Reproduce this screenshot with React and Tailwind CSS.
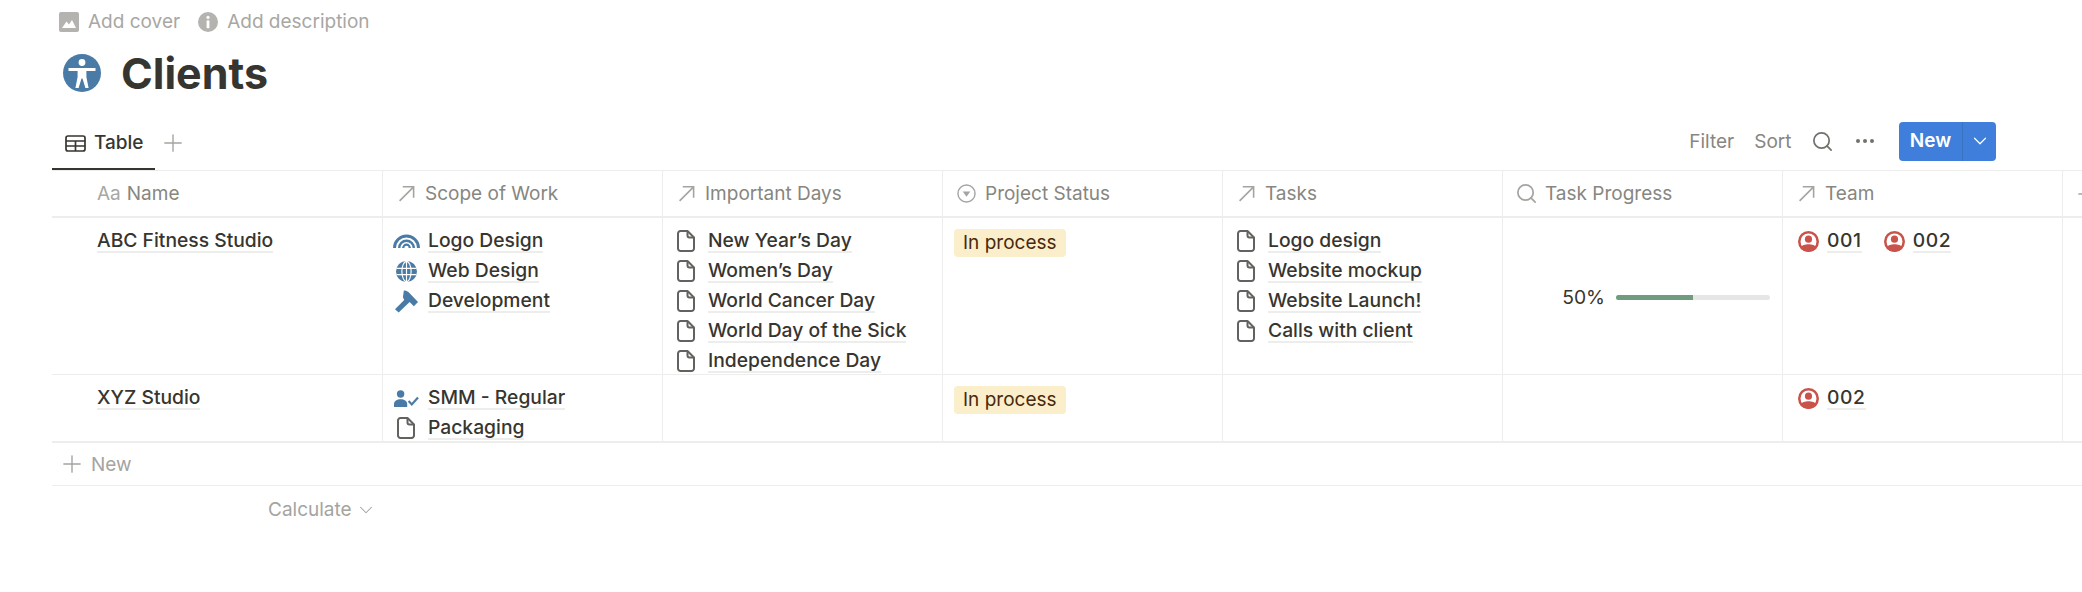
import React from 'react';
import { Search, Plus, ChevronDown } from 'lucide-react';

const blue = '#4a7ba6';

function ArrowIcon() {
  return (
    <svg viewBox="0 0 16 16" className="w-[17px] h-[17px] shrink-0" fill="none" stroke="#a5a4a0" strokeWidth="1.5">
      <path d="M1.5 15 L14.5 2 M4.5 1.7 H14.7 V12" />
    </svg>
  );
}

function DocIcon() {
  return (
    <svg viewBox="0 0 18 22" className="w-[18px] h-[22px] shrink-0" fill="none" stroke="#64625e" strokeWidth="2" strokeLinejoin="round">
      <path d="M3.5 1 H10.5 L17 7.5 V18.5 A2.5 2.5 0 0 1 14.5 21 H3.5 A2.5 2.5 0 0 1 1 18.5 V3.5 A2.5 2.5 0 0 1 3.5 1 Z" />
      <path d="M10.5 1 V5.5 A2 2 0 0 0 12.5 7.5 H17" />
    </svg>
  );
}

function RainbowIcon() {
  return (
    <svg viewBox="0 0 27 14" className="w-[27px] h-[14px] shrink-0" fill="none" stroke={blue}>
      <path strokeWidth="3" d="M1.5 14 A12 12 0 0 1 25.5 14" />
      <path strokeWidth="2.4" d="M6.2 14 A7.3 7.3 0 0 1 20.8 14" />
      <path strokeWidth="2.2" d="M10.2 14 A3.3 3.3 0 0 1 16.8 14" />
    </svg>
  );
}

function GlobeIcon() {
  return (
    <svg viewBox="0 0 20 20" className="w-[21px] h-[21px] shrink-0">
      <circle cx="10" cy="10" r="10" fill={blue} />
      <g fill="none" stroke="#fff" strokeWidth="1.1">
        <ellipse cx="10" cy="10" rx="4.4" ry="9.6" />
        <path d="M10 0.5 V19.5 M0.5 7 H19.5 M0.5 13 H19.5" />
      </g>
    </svg>
  );
}

function HammerIcon() {
  return (
    <svg viewBox="0 0 22 22" className="w-[23px] h-[23px] shrink-0" fill={blue}>
      <path d="M0 18.5 L8.8 9.5 L7.6 7 L8.4 0.6 C11 0.4 13 2 14 3 L22 11.5 L18 15.5 L14 11.5 L3.5 21.5 Z" />
    </svg>
  );
}

function PersonCheckIcon() {
  return (
    <svg viewBox="0 0 25 17" className="w-[25px] h-[17px] shrink-0" fill={blue}>
      <circle cx="6.6" cy="4" r="3.7" />
      <path d="M0 17 V14 C0 11 3 9.2 6.6 9.2 C10.2 9.2 13.2 11 13.2 14 V17 Z" />
      <path d="M14.6 11 L17.8 14.4 L24 7.6" fill="none" stroke={blue} strokeWidth="2.2" />
    </svg>
  );
}

function PersonIcon() {
  return (
    <svg viewBox="0 0 20 20" className="w-[21px] h-[21px] shrink-0">
      <defs>
        <clipPath id="badge">
          <circle cx="10" cy="10" r="10" />
        </clipPath>
      </defs>
      <circle cx="10" cy="10" r="8.8" fill="none" stroke="#c9534a" strokeWidth="2.4" />
      <circle cx="10" cy="7.8" r="3.4" fill="#c9534a" />
      <path d="M2 20 V16.5 C3.5 13.4 7 12.7 10 12.7 C13 12.7 16.5 13.4 18 16.5 V20 Z" fill="#c9534a" clipPath="url(#badge)" />
    </svg>
  );
}

function AccessIcon() {
  return (
    <svg viewBox="0 0 38 38" className="w-[38px] h-[38px] shrink-0">
      <circle cx="19" cy="19" r="19" fill={blue} />
      <circle cx="19" cy="8.5" r="3.4" fill="#fff" />
      <path d="M5.5 14 H32.5 V17 H23.4 V23 L25.6 34 H22.4 L19.5 24.5 H18.5 L15.6 34 H12.4 L14.6 23 V17 H5.5 Z" fill="#fff" />
    </svg>
  );
}

function Link({ icon, children }) {
  return (
    <div className="flex items-center h-[30px]">
      <span className="w-[44px] flex justify-center shrink-0">{icon}</span>
      <span className="border-b-2 border-[#ededec] leading-[22px] whitespace-nowrap">{children}</span>
    </div>
  );
}

function Tag() {
  return (
    <div className="mt-[3px] ml-[11px] w-fit h-[28px] px-[9px] flex items-center rounded-[4px] bg-[#fbeecb] text-[19px] text-[#49290e] font-normal">
      In process
    </div>
  );
}

function Cell({ children, className = '' }) {
  return <div className={`border-r border-[#ededec] min-w-0 ${className}`}>{children}</div>;
}

function Head({ icon, label }) {
  return (
    <Cell className="flex items-center pl-[14px] gap-[10px]">
      <span className="w-[18px] flex justify-center shrink-0">{icon}</span>
      <span className="pt-[2px]">{label}</span>
    </Cell>
  );
}

function Member({ n }) {
  return (
    <div className="flex items-center h-[30px] gap-[8px]">
      <PersonIcon />
      <span className="border-b-2 border-[#ededec] leading-[22px] tracking-[0.6px]">{n}</span>
    </div>
  );
}

const rowGrid = 'grid grid-cols-[331px_repeat(6,280px)_20px]';

export default function App() {
  const doc = <DocIcon />;
  return (
    <div className="w-[2082px] h-[592px] overflow-hidden bg-white pl-[52px] text-[19px] text-[#37352f] font-['Inter',sans-serif]">
      <div className="h-[44px] flex items-center gap-[18px] pl-[7px] text-[#a8a7a3]">
        <div className="flex items-center gap-[9px]">
          <svg viewBox="0 0 20 20" className="w-[20px] h-[20px]">
            <rect width="20" height="20" rx="2" fill="#b4b3b0" />
            <path d="M3 16 L7.5 9.5 L10 12.5 L13 8 L17 16 Z" fill="#fff" />
          </svg>
          <span>Add cover</span>
        </div>
        <div className="flex items-center gap-[9px]">
          <svg viewBox="0 0 20 20" className="w-[20px] h-[20px]">
            <circle cx="10" cy="10" r="10" fill="#b4b3b0" />
            <circle cx="10" cy="5.4" r="1.6" fill="#fff" />
            <rect x="8.6" y="8.4" width="2.8" height="7.8" fill="#fff" />
          </svg>
          <span>Add description</span>
        </div>
      </div>

      <div className="h-[58px] flex items-center pl-[11px] gap-[20px]">
        <AccessIcon />
        <h1 className="text-[43px] font-bold leading-none">Clients</h1>
      </div>

      <div className="h-[68px] flex items-end justify-between">
        <div className="flex items-center h-[68px]">
          <div className="w-[103px] h-[68px] flex items-center pl-[13px] gap-[8px] border-b-2 border-[#37352f] font-medium pt-[16px]">
            <svg viewBox="0 0 21 17" className="w-[21px] h-[17px]" fill="none" stroke="#37352f" strokeWidth="1.7">
              <rect x="1" y="1" width="19" height="15" rx="2" />
              <path d="M1 6 H20 M1 11 H20 M10.5 6 V16" />
            </svg>
            <span>Table</span>
          </div>
          <Plus size={28} strokeWidth={1.2} className="ml-[4px] mt-[14px] text-[#a5a4a0]" />
        </div>
        <div className="flex items-center h-[68px] pt-[18px] pb-[8px] mr-[86px] text-[#87867f]">
          <span className="pt-[2px]">Filter</span>
          <span className="ml-[20px] pt-[2px]">Sort</span>
          <Search size={23} strokeWidth={1.8} className="ml-[19px] text-[#73716c]" />
          <div className="ml-[22px] flex gap-[2.5px]">
            <span className="w-[4.5px] h-[4.5px] rounded-full bg-[#73716c]" />
            <span className="w-[4.5px] h-[4.5px] rounded-full bg-[#73716c]" />
            <span className="w-[4.5px] h-[4.5px] rounded-full bg-[#73716c]" />
          </div>
          <div className="ml-[25px] w-[97px] h-[39px] flex rounded-[4px] bg-[#3f7fdb] text-white font-semibold">
            <div className="w-[64px] flex items-center justify-center border-r border-[#3a72c2]">New</div>
            <div className="flex-1 flex items-center justify-center">
              <ChevronDown size={22} strokeWidth={1.3} />
            </div>
          </div>
        </div>
      </div>

      <div className={`${rowGrid} h-[48px] border-b-2 border-t border-[#ededec] text-[#87867f]`}>
        <Cell className="flex items-center pl-[45px] pt-[2px]">
          <span className="text-[#a8a7a3] mr-[6px]">Aa</span>
          <span>Name</span>
        </Cell>
        <Head icon={<ArrowIcon />} label="Scope of Work" />
        <Head icon={<ArrowIcon />} label="Important Days" />
        <Head
          icon={
            <svg viewBox="0 0 20 20" className="w-[19px] h-[19px] shrink-0" fill="none" stroke="#a5a4a0" strokeWidth="1.5">
              <circle cx="10" cy="10" r="9" />
              <path d="M6 8 H14 L10 13.5 Z" fill="#a5a4a0" stroke="none" />
            </svg>
          }
          label="Project Status"
        />
        <Head icon={<ArrowIcon />} label="Tasks" />
        <Head icon={<Search size={23} strokeWidth={1.8} className="text-[#a5a4a0] shrink-0" />} label="Task Progress" />
        <Head icon={<ArrowIcon />} label="Team" />
        <div className="flex items-center pl-[10px] overflow-hidden">
          <Plus size={28} strokeWidth={1.2} className="shrink-0 text-[#a5a4a0]" />
        </div>
      </div>

      <div className={`${rowGrid} h-[157px] border-b border-[#ededec] text-[19.3px] font-[450]`}>
        <Cell className="pl-[45px] pt-[8px]">
          <div className="h-[30px] flex items-center">
            <span className="border-b-2 border-[#ededec] leading-[22px]">ABC Fitness Studio</span>
          </div>
        </Cell>
        <Cell className="pt-[8px] pl-[1px]">
          <Link icon={<RainbowIcon />}>Logo Design</Link>
          <Link icon={<GlobeIcon />}>Web Design</Link>
          <Link icon={<HammerIcon />}>Development</Link>
        </Cell>
        <Cell className="pt-[8px] pl-[1px]">
          {['New Year’s Day', 'Women’s Day', 'World Cancer Day', 'World Day of the Sick', 'Independence Day'].map((d) => (
            <Link key={d} icon={doc}>{d}</Link>
          ))}
        </Cell>
        <Cell className="pt-[8px]">
          <Tag />
        </Cell>
        <Cell className="pt-[8px] pl-[1px]">
          {['Logo design', 'Website mockup', 'Website Launch!', 'Calls with client'].map((t) => (
            <Link key={t} icon={doc}>{t}</Link>
          ))}
        </Cell>
        <Cell className="flex items-center justify-end pr-[12px] gap-[11px] font-normal">
          <span>50%</span>
          <div className="w-[154px] h-[5px] rounded-full bg-[#e6e6e4] overflow-hidden">
            <div className="h-full bg-[#6f9c7e]" style={{ width: '50%' }} />
          </div>
        </Cell>
        <Cell className="pt-[8px] pl-[15px] flex items-start gap-[22px]">
          <Member n="001" />
          <Member n="002" />
        </Cell>
        <div />
      </div>

      <div className={`${rowGrid} h-[68px] border-b-2 border-[#ededec] text-[19.3px] font-[450]`}>
        <Cell className="pl-[45px] pt-[8px]">
          <div className="h-[30px] flex items-center">
            <span className="border-b-2 border-[#ededec] leading-[22px]">XYZ Studio</span>
          </div>
        </Cell>
        <Cell className="pt-[8px] pl-[1px]">
          <Link icon={<PersonCheckIcon />}>SMM - Regular</Link>
          <Link icon={doc}>Packaging</Link>
        </Cell>
        <Cell />
        <Cell className="pt-[8px]">
          <Tag />
        </Cell>
        <Cell />
        <Cell />
        <Cell className="pt-[8px] pl-[15px]">
          <Member n="002" />
        </Cell>
        <div />
      </div>

      <div className="h-[43px] flex items-center pl-[6px] gap-[5px] border-b border-[#ededec] text-[#a5a4a0]">
        <Plus size={28} strokeWidth={1.2} />
        <span className="pt-[2px]">New</span>
      </div>

      <div className="h-[48px] flex items-center pl-[216px] gap-[3px] text-[#a5a4a0]">
        <span>Calculate</span>
        <ChevronDown size={22} strokeWidth={1.1} />
      </div>
    </div>
  );
}
